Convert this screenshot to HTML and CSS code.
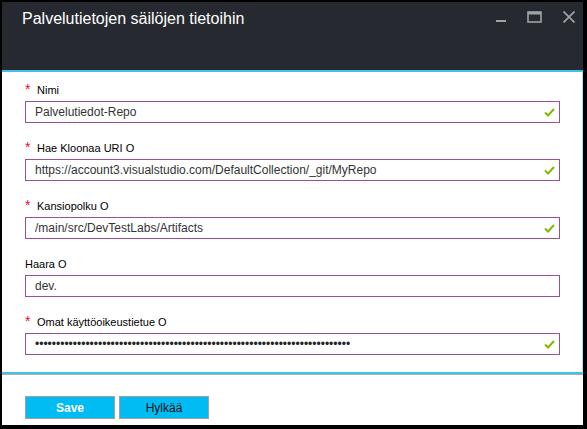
FILE: index.html
```html
<!DOCTYPE html>
<html lang="fi">
<head>
<meta charset="utf-8">
<title>Palvelutietojen säilöjen tietoihin</title>
<link rel="stylesheet" href="styles.css">
</head>
<body>
<div class="window">
  <div class="header">
    <h1 class="title">Palvelutietojen säilöjen tietoihin</h1>
    <div class="controls">
      <svg class="ctl" width="10" height="12" viewBox="0 0 10 12"><rect x="0" y="9" width="10" height="2" fill="#9ea3a7"/></svg>
      <svg class="ctl" width="15" height="12" viewBox="0 0 15 12"><rect x="1" y="1" width="13" height="10" fill="none" stroke="#9ea3a7" stroke-width="1.6"/><rect x="1" y="1" width="13" height="2.5" fill="#9ea3a7"/></svg>
      <svg class="ctl" width="12" height="12" viewBox="0 0 12 12"><path d="M0.5 0.5 L11.5 11.5 M11.5 0.5 L0.5 11.5" stroke="#9ea3a7" stroke-width="1.7"/></svg>
    </div>
  </div>
  <div class="content">
    <div class="field">
      <label class="label"><span class="req">*</span>Nimi</label>
      <div class="input"><span class="value">Palvelutiedot-Repo</span><svg class="check" width="11" height="9" viewBox="0 0 11 9"><path d="M1 4.5 L4 7.5 L10 1" fill="none" stroke="#7fba00" stroke-width="2"/></svg></div>
    </div>
    <div class="field">
      <label class="label"><span class="req">*</span>Hae Kloonaa URI O</label>
      <div class="input"><span class="value">https://account3.visualstudio.com/DefaultCollection/_git/MyRepo</span><svg class="check" width="11" height="9" viewBox="0 0 11 9"><path d="M1 4.5 L4 7.5 L10 1" fill="none" stroke="#7fba00" stroke-width="2"/></svg></div>
    </div>
    <div class="field">
      <label class="label"><span class="req">*</span>Kansiopolku O</label>
      <div class="input"><span class="value">/main/src/DevTestLabs/Artifacts</span><svg class="check" width="11" height="9" viewBox="0 0 11 9"><path d="M1 4.5 L4 7.5 L10 1" fill="none" stroke="#7fba00" stroke-width="2"/></svg></div>
    </div>
    <div class="field">
      <label class="label">Haara O</label>
      <div class="input"><span class="value">dev.</span></div>
    </div>
    <div class="field">
      <label class="label"><span class="req">*</span>Omat käyttöoikeustietue O</label>
      <div class="input"><span class="value dots">•••••••••••••••••••••••••••••••••••••••••••••••••••••••••••••••••••••••••••</span><svg class="check" width="11" height="9" viewBox="0 0 11 9"><path d="M1 4.5 L4 7.5 L10 1" fill="none" stroke="#7fba00" stroke-width="2"/></svg></div>
    </div>
  </div>
  <div class="footer">
    <button class="btn btn-save">Save</button>
    <button class="btn btn-cancel">Hylkää</button>
  </div>
</div>
</body>
</html>
```
FILE: styles.css
```css
html, body {
  margin: 0;
  padding: 0;
  background: #000;
}
body {
  width: 587px;
  height: 429px;
  overflow: hidden;
}
.window {
  margin: 2px 4px 0 2px;
  width: 581px;
  height: 423px;
  background: #fff;
  display: flex;
  flex-direction: column;
}
.header {
  height: 68px;
  background: #262a30;
  border-bottom: 2px solid #3fc1ea;
  display: flex;
  justify-content: space-between;
  align-items: flex-start;
}
.title {
  margin: 0;
  padding: 7px 0 0 20px;
  font-family: "Liberation Sans", Arial, sans-serif;
  font-weight: normal;
  font-size: 16px;
  line-height: 20px;
  color: #fff;
}
.controls {
  display: flex;
  gap: 21px;
  padding: 9px 8px 0 0;
}
.ctl {
  display: block;
}
.content {
  height: 290px;
  padding: 10px 0 0 23px;
  border-right: 1px solid #a8e4f5;
  border-bottom: 2px solid #3fc1ea;
  display: flex;
  flex-direction: column;
  gap: 17px;
}
.field {
  display: flex;
  flex-direction: column;
  gap: 3px;
}
.label {
  height: 16px;
  line-height: 16px;
  font-family: "Liberation Sans", Arial, sans-serif;
  font-size: 11px;
  color: #000;
  display: flex;
  align-items: center;
}
.req {
  color: #e81123;
  width: 12px;
  font-size: 14px;
  line-height: 16px;
  position: relative;
  top: -1px;
}
.input {
  box-sizing: border-box;
  width: 535px;
  height: 22px;
  border: 1px solid #9b4f96;
  display: flex;
  align-items: center;
  justify-content: space-between;
  padding: 0 4px 0 9px;
}
.value {
  font-family: "Liberation Sans", Arial, sans-serif;
  font-size: 12px;
  color: #333;
}
.dots {
  color: #222;
}
.check {
  display: block;
}
.footer {
  flex: 1;
  border-top: 1px solid #b0b0b0;
  display: flex;
  gap: 4px;
  padding: 21px 0 0 23px;
  align-items: flex-start;
}
.btn {
  width: 90px;
  height: 23px;
  background: #00bcf2;
  border: 1px solid #a0a0a0;
  font-family: "Liberation Sans", Arial, sans-serif;
  font-size: 12px;
  padding: 0;
  margin: 0;
}
.btn-save {
  color: #fff;
  font-weight: bold;
}
.btn-cancel {
  color: #111;
}
```
